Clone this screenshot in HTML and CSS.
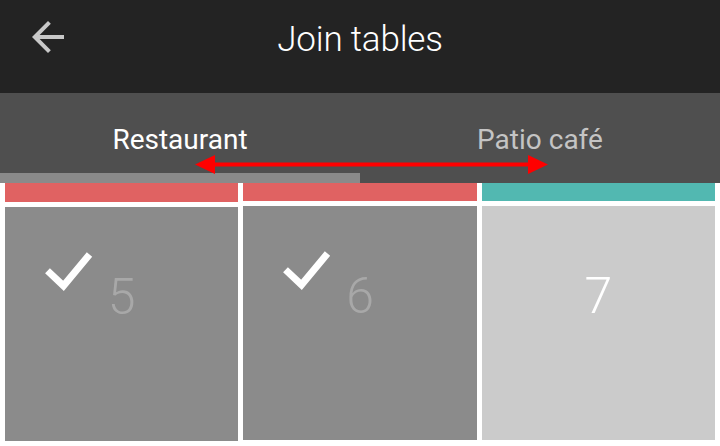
FILE: index.html
```html
<!DOCTYPE html>
<html>
<head>
<meta charset="utf-8">
<link rel="stylesheet" href="styles.css">
</head>
<body>
<div class="app">
  <header class="topbar">
    <div class="back">
      <svg width="48" height="48" viewBox="0 0 24 24"><path fill="#c8c8c8" d="M20 11H7.83l5.59-5.59L12 4l-8 8 8 8 1.41-1.41L7.83 13H20v-2z"/></svg>
    </div>
    <h1 class="title">Join tables</h1>
    <div></div>
  </header>
  <nav class="tabbar">
    <div class="tabs">
      <div class="tab active">Restaurant</div>
      <div class="tab">Patio café</div>
    </div>
    <div class="indicator"></div>
    <svg class="swipe" width="353" height="19" viewBox="0 0 353 19">
      <rect x="18" y="7.5" width="317" height="4" fill="#ff0000"/>
      <polygon points="0,9.5 20,0 20,19" fill="#ff0000"/>
      <polygon points="353,9.5 333,0 333,19" fill="#ff0000"/>
    </svg>
  </nav>
  <main class="columns">
    <section class="col col-shift">
      <div class="strip red"></div>
      <div class="card selected">
        <svg class="check" width="48" height="40" viewBox="0 0 48 40"><polyline points="2.5,18.8 18.5,33.8 44.5,2.5" fill="none" stroke="#ffffff" stroke-width="7" stroke-linejoin="miter"/></svg>
        <span class="num dim">5</span>
      </div>
    </section>
    <section class="col">
      <div class="strip red"></div>
      <div class="card selected">
        <svg class="check" width="48" height="40" viewBox="0 0 48 40"><polyline points="2.5,18.8 18.5,33.8 44.5,2.5" fill="none" stroke="#ffffff" stroke-width="7" stroke-linejoin="miter"/></svg>
        <span class="num dim">6</span>
      </div>
    </section>
    <section class="col">
      <div class="strip teal"></div>
      <div class="card free">
        <span class="num">7</span>
      </div>
    </section>
  </main>
</div>
</body>
</html>
```
FILE: styles.css
```css
html, body {
  margin: 0;
  padding: 0;
  background: #ffffff;
}
body {
  font-family: Roboto, "Liberation Sans", sans-serif;
  width: 720px;
  height: 446px;
  overflow: hidden;
}
.topbar {
  height: 93px;
  background: #232323;
  display: grid;
  grid-template-columns: 1fr auto 1fr;
  align-items: start;
}
.back {
  margin-left: 24px;
  margin-top: 13px;
  width: 48px;
  height: 48px;
}
.back svg {
  display: block;
}
.title {
  margin: 0;
  padding-top: 18.5px;
  font-size: 35px;
  line-height: 41px;
  font-weight: 300;
  letter-spacing: -0.2px;
  color: #ffffff;
}
.tabbar {
  position: relative;
  height: 90px;
  background: #4f4f4f;
}
.tabs {
  display: flex;
  height: 80px;
}
.tab {
  flex: 1;
  text-align: center;
  font-size: 28px;
  line-height: 32px;
  padding-top: 30.7px;
  color: #c4c4c4;
}
.tab.active {
  color: #ffffff;
}
.indicator {
  width: 360px;
  height: 10px;
  background: #8a8a8a;
}
.swipe {
  position: absolute;
  left: 195px;
  top: 62px;
  display: block;
}
.columns {
  display: flex;
  gap: 5px;
  padding: 0 5px;
  align-items: flex-start;
}
.col {
  flex: 1;
  display: flex;
  flex-direction: column;
  gap: 5px;
}
.strip {
  height: 18px;
}
.col-shift .strip {
  height: 19px;
}
.red {
  background: #e06262;
}
.teal {
  background: #52b8b1;
}
.card {
  position: relative;
  height: 234px;
  text-align: center;
}
.selected {
  background: #8b8b8b;
}
.free {
  background: #cbcbcb;
}
.check {
  position: absolute;
  left: 40px;
  top: 45px;
  display: block;
}
.num {
  display: block;
  padding-top: 60px;
  font-size: 50px;
  line-height: 60px;
  font-weight: 300;
  color: #ffffff;
}
.num.dim {
  color: #a8a8a8;
}
```
